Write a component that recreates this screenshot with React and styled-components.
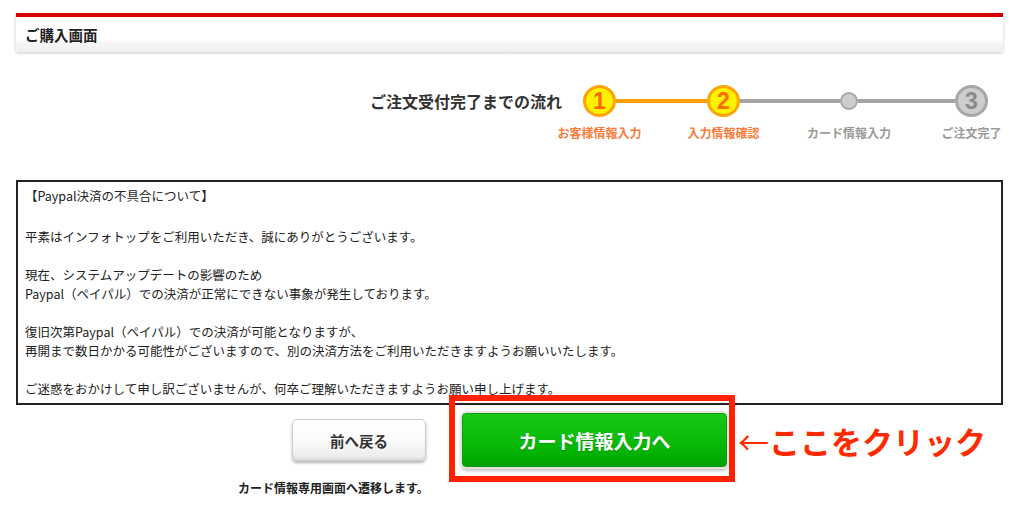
import React from "react";
import styled, { createGlobalStyle } from "styled-components";

const GlobalStyle = createGlobalStyle`
  html, body { margin: 0; padding: 0; background: #fff; }
  body { font-family: "Noto Sans CJK JP", "Noto Sans", sans-serif; color: #222; }
  * { box-sizing: border-box; }
`;

const Page = styled.div`
  padding: 13px 21px 0 16px;
`;

const Header = styled.div`
  height: 39px;
  border-top: 4px solid #d40000;
  padding-left: 9px;
  display: flex;
  align-items: center;
  font-size: 14.5px;
  font-weight: 700;
  color: #222;
  background: linear-gradient(to bottom, #fff 0%, #fff 66%, #f6f6f6 74%, #efefef 100%);
  box-shadow: 0 1px 3px rgba(0, 0, 0, 0.22);
`;

const Progress = styled.div`
  margin-top: 33px;
  padding-right: 15px;
  display: flex;
  justify-content: flex-end;
  align-items: flex-start;
`;

const FlowTitle = styled.div`
  font-size: 16px;
  font-weight: 700;
  line-height: 32px;
  color: #333;
  margin-right: 21px;
  white-space: nowrap;
`;

const Track = styled.div`
  display: flex;
  align-items: flex-start;
  flex-shrink: 0;
`;

const Step = styled.div`
  width: ${(p) => (p.$small ? 18 : 33)}px;
  flex-shrink: 0;
  display: flex;
  flex-direction: column;
  align-items: center;
  gap: 8px;
`;

const Node = styled.div`
  flex-shrink: 0;
  width: ${(p) => (p.$small ? 18 : 33)}px;
  height: ${(p) => (p.$small ? 18 : 32)}px;
  margin: ${(p) => (p.$small ? "7px 0" : "0")};
  border-radius: 50%;
  border: ${(p) => (p.$small ? 2 : 3)}px solid ${(p) => (p.$active ? "#ffa300" : "#a7a7a7")};
  background: ${(p) => (p.$active ? "#fff100" : "#cdcdcd")};
  color: ${(p) => (p.$active ? "#ff6a00" : "#8a8a8a")};
  display: flex;
  align-items: center;
  justify-content: center;
  font-family: "Liberation Sans", Arial, sans-serif;
  font-weight: 700;
  font-size: 23px;
  line-height: 1;
`;

const StepLabel = styled.div`
  flex-shrink: 0;
  font-size: 12px;
  font-weight: 700;
  line-height: 16px;
  white-space: nowrap;
  color: ${(p) => (p.$active ? "#fa7c3c" : "#9a9a9a")};
`;

const Connector = styled.div`
  flex-shrink: 0;
  width: ${(p) => p.$w}px;
  height: 4px;
  margin-top: 14px;
  background: ${(p) => (p.$active ? "#ffa000" : "#a3a3a3")};
`;

const Notice = styled.div`
  margin-top: 39px;
  border: 2px solid #222;
  padding: 4px 7px 5px;
  font-size: 12.5px;
  line-height: 19px;
  color: #222;
`;

const Para = styled.p`
  margin: 0 0 ${(p) => p.$after}px;
`;

const ButtonRow = styled.div`
  margin-top: 8px;
  padding-left: 276px;
  display: flex;
  align-items: center;
`;

const BackButton = styled.button`
  flex-shrink: 0;
  width: 134px;
  height: 42px;
  border: 1px solid #cfcfcf;
  border-radius: 5px;
  background: linear-gradient(to bottom, #ffffff 0%, #fafafa 55%, #e9e9e9 100%);
  box-shadow: 0 2px 3px rgba(0, 0, 0, 0.3), inset 0 -2px 2px rgba(0, 0, 0, 0.05);
  font-family: "Noto Sans CJK JP", sans-serif;
  font-size: 14.5px;
  font-weight: 700;
  color: #333;
  padding: 0;
`;

const Highlight = styled.div`
  flex-shrink: 0;
  position: relative;
  margin-left: 36px;
  &::after {
    content: "";
    position: absolute;
    top: -18px;
    left: -13px;
    right: -8px;
    bottom: -15px;
    border: 6px solid #ff2200;
    pointer-events: none;
  }
`;

const NextButton = styled.button`
  display: block;
  width: 265px;
  height: 54px;
  border: 1px solid #0a9c0a;
  border-radius: 4px;
  background: linear-gradient(to bottom, #17c817 0%, #0cbe0c 45%, #02b002 80%, #03a003 100%);
  box-shadow: 0 0 0 2px #e2e2e2, 0 3px 4px rgba(0, 0, 0, 0.35);
  font-family: "Noto Sans CJK JP", sans-serif;
  font-size: 19px;
  font-weight: 700;
  color: #fff;
  text-shadow: 0 1px 1px rgba(0, 0, 0, 0.2);
  padding: 0;
`;

const Annotation = styled.div`
  flex-shrink: 0;
  margin-left: 11px;
  font-size: 31px;
  font-weight: 700;
  line-height: 1;
  color: #ff2a00;
  white-space: nowrap;
`;

const Arrow = styled.span`
  font-weight: 400;
`;

const Caption = styled.div`
  margin-top: 13px;
  padding-left: 222px;
  font-size: 12px;
  font-weight: 700;
  line-height: 16px;
  color: #222;
`;

const steps = [
  { key: "1", label: "お客様情報入力", active: true },
  { key: "2", label: "入力情報確認", active: true },
  { key: "", label: "カード情報入力", active: false, small: true },
  { key: "3", label: "ご注文完了", active: false },
];
const connectors = [
  { w: 91, active: true },
  { w: 100, active: false },
  { w: 97, active: false },
];

export default function App() {
  return (
    <>
      <GlobalStyle />
      <Page>
        <Header>ご購入画面</Header>

        <Progress>
          <FlowTitle>ご注文受付完了までの流れ</FlowTitle>
          <Track>
            {steps.map((s, i) => (
              <React.Fragment key={s.label}>
                <Step $small={s.small}>
                  <Node $active={s.active} $small={s.small}>
                    {s.key}
                  </Node>
                  <StepLabel $active={s.active}>{s.label}</StepLabel>
                </Step>
                {i < connectors.length && (
                  <Connector $w={connectors[i].w} $active={connectors[i].active} />
                )}
              </React.Fragment>
            ))}
          </Track>
        </Progress>

        <Notice>
          <Para $after={22}>【Paypal決済の不具合について】</Para>
          <Para $after={19}>平素はインフォトップをご利用いただき、誠にありがとうございます。</Para>
          <Para $after={19}>
            現在、システムアップデートの影響のため
            <br />
            Paypal（ペイパル）での決済が正常にできない事象が発生しております。
          </Para>
          <Para $after={19}>
            復旧次第Paypal（ペイパル）での決済が可能となりますが、
            <br />
            再開まで数日かかる可能性がございますので、別の決済方法をご利用いただきますようお願いいたします。
          </Para>
          <Para $after={0}>
            ご迷惑をおかけして申し訳ございませんが、何卒ご理解いただきますようお願い申し上げます。
          </Para>
        </Notice>

        <ButtonRow>
          <BackButton>前へ戻る</BackButton>
          <Highlight>
            <NextButton>カード情報入力へ</NextButton>
          </Highlight>
          <Annotation>
            <Arrow>←</Arrow>ここをクリック
          </Annotation>
        </ButtonRow>

        <Caption>カード情報専用画面へ遷移します。</Caption>
      </Page>
    </>
  );
}
